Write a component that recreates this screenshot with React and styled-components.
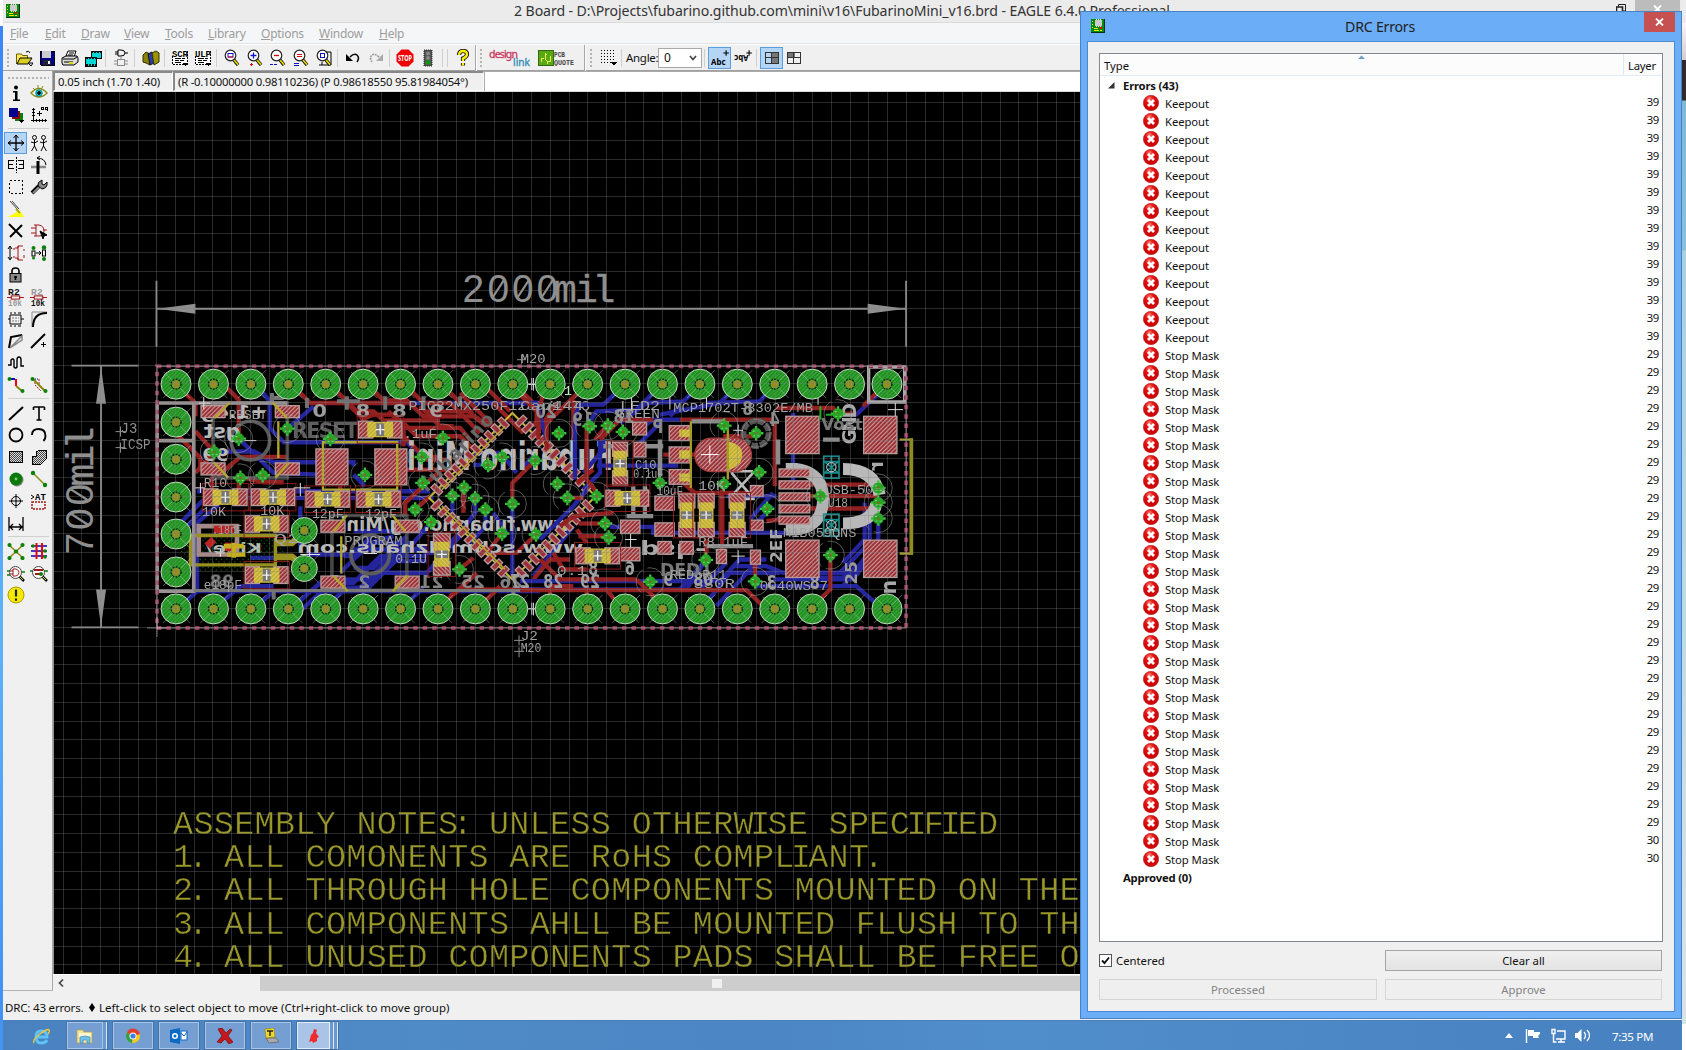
import React from "react";
import styled, { createGlobalStyle } from "styled-components";

const ui = `"Noto Sans", "Open Sans", sans-serif`;
const mono = `"Liberation Mono", monospace`;

const Global = createGlobalStyle`
  * { box-sizing: border-box; }
  html, body { margin: 0; padding: 0; overflow: hidden; }
  body { font-family: ${ui}; font-size: 11.3px; color: #111; background: #fff; }
  svg { display: block; }
`;

/* ---------- shell ---------- */
const Desktop = styled.div`
  position: relative; width: 1686px; height: 1050px; overflow: hidden;
  display: grid; grid-template-columns: 3px 1679px 4px; background: #fff;
`;
const LeftEdge = styled.div`
  background: linear-gradient(#fff 0 26px, #3a86f8 26px, #4d9cf8 450px, #5db4fa 620px, #4294f4 990px);
`;
const RightEdge = styled.div`
  background: linear-gradient(#ececec 0 23px, #f6f6f6 23px, #cfcfcf 60px, #2c2c30 60px 100px, #7fb9d6 101px, #8cc0da 250px, #a9cfe2 251px, #cfe0ea 860px, #d5e4ec 1024px, #fff 1024px);
`;
const Main = styled.div`display: flex; flex-direction: column; height: 1050px; min-width: 0;`;
const TitleBar = styled.div`
  height: 23px; background: #ebebeb; border-bottom: 1px solid #dadcde; display: flex; align-items: center;
  padding-left: 3px; font-size: 14.1px; color: #333; flex: none; letter-spacing: -0.08px;
`;
const TitleText = styled.div`flex: 1; padding: 0 0 1px 494px; white-space: pre;`;
const WinButtons = styled.div`display: flex; align-self: flex-start; padding-right: 2px; align-items: flex-start;`;
const GreyClose = styled.div`
  width: 45px; height: 20px; background: #bcbcbc; color: #fff; display: flex; justify-content: center; padding-top: 5px;
`;
const RestoreBox = styled.div`width: 19px; padding-top: 4px;`;
const MenuBar = styled.div`
  height: 21px; background: #f5f6f7; display: flex; padding-left: 7px; gap: 16px; align-items: center;
  color: #9d9d9d; flex: none; border-bottom: 1px solid #e3e3e3; font-size: 12px;
`;
const MenuItem = styled.span`
  width: ${(p) => p.$w}px; letter-spacing: -0.25px; white-space: nowrap; display: inline-block;
  &::first-letter { text-decoration: underline; }
`;
const ToolBar = styled.div`
  height: 27px; background: #f0f0f0; display: flex; align-items: center; flex: none;
  border-bottom: 1px solid #a0a0a0; border-top: 1px solid #fff; padding-left: 3px;
`;
const Grip = styled.div`
  flex: none; width: ${(p) => (p.$h ? "42px" : "4px")}; height: ${(p) => (p.$h ? "4px" : "20px")};
  margin: ${(p) => p.$m || "0"};
  background-image: radial-gradient(circle, #b4b4b4 1px, transparent 1.2px); background-size: 4px 4px;
`;
const Slot = styled.div`
  width: ${(p) => p.$w || 23}px; height: 22px; display: flex; align-items: center; justify-content: center; flex: none;
  background: ${(p) => (p.$on ? "#b5d5f5" : "none")};
  border: ${(p) => (p.$on ? "1px solid #5a9de0" : "0")};
`;
const Sep = styled.div`
  width: ${(p) => p.$w || 6}px; height: 18px; flex: none; display: flex; justify-content: space-evenly;
  &::before { content: ""; width: 1px; background: #cfcfcf; }
  &::after { content: ""; width: ${(p) => (p.$two ? 1 : 0)}px; background: #cfcfcf; }
`;
const BarEnd = styled.div`width: 2px; height: 26px; background: #a6a6a6; border-right: 1px solid #fff; margin: ${(p) => p.$m || 0}; flex: none;`;
const AngleLabel = styled.span`width: 33px; font-size: 11.5px; letter-spacing: -0.3px; padding-left: 1px; flex: none;`;
const Select = styled.div`
  width: 44px; height: 20px; border: 1px solid #a9a9a9; background: #fff; display: flex; align-items: center;
  justify-content: space-between; padding: 0 4px 0 5px; font-size: 12px; flex: none;
`;
const Work = styled.div`display: flex; height: 920px; flex: none;`;
const SideBar = styled.div`
  width: 50px; background: #f0f0f0; border-right: 1px solid #a8a8a8; border-bottom: 1px solid #b4b4b4; padding: 5px 2px 0 1px; flex: none;
`;
const Tools = styled.div`display: grid; grid-template-columns: 23px 23px; grid-auto-rows: 22px; padding-top: ${(p) => p.$t || 0}px;`;
const HSep = styled.div`height: 1px; background: #d0d0d0; margin: ${(p) => p.$m} 1px ${(p) => p.$b} 4px;`;
const Stage = styled.div`display: flex; flex-direction: column; flex: 1; min-width: 0;`;
const CoordRow = styled.div`height: 21px; display: flex; background: #f0f0f0; flex: none; border-bottom: 1px solid #dcdcdc;`;
const Coord = styled.div`
  width: ${(p) => p.$w}px; border: 1px solid #fff; border-top: 2px solid #888; border-left: 2px solid #888; padding-left: 3px;
  line-height: 17px; font-size: ${(p) => p.$f}px; letter-spacing: ${(p) => p.$ls}px; white-space: nowrap;
`;
const Command = styled.div`flex: 1; background: #fff; border-left: 1px solid #aaa; border-top: 1px solid #aaa;`;
const Scroll = styled.div`
  height: 16px; margin-top: 1px; display: flex; background: #f0f0f0; flex: none; align-items: center;
`;
const Thumb = styled.div`height: 15px; flex: 1; margin-left: 191px; background: #cdcdcd; padding: 3px 0 0 452px;`;
const Nub = styled.div`width: 10px; height: 9px; background: #f0f0f0;`;
const Status = styled.div`
  height: 29px; background: #f0f0f0; display: flex; align-items: center; padding: 3px 0 0 2px; flex: none; gap: 4px; white-space: pre;
`;
const StatusText = styled.span`font-size: 11.5px; letter-spacing: ${(p) => p.$ls}px; width: ${(p) => p.$w}px;`;

/* ---------- taskbar ---------- */
const TaskBar = styled.div`
  height: 30px; flex: none; display: flex; border-top: 1px solid #4a80bd;
  background: linear-gradient(90deg, #4a82c0, #4f8bc7 25%, #4c86c4 45%, #508ecb 60%, #4880c0);
`;
const TaskBtn = styled.div`
  width: ${(p) => p.$w || 42}px; height: 29px; margin-right: 4px; display: flex; flex: none;
  background: ${(p) => (p.$hot ? "#a9c4e6" : "#759fd2")}; border: 1px solid #b4cdea; outline: 1px solid #4673a8; outline-offset: -1px;
  border-color: ${(p) => (p.$hot ? "#e8f1fb" : "#a3c0e3")};
`;
const TaskFace = styled.div`
  flex: 1; display: flex; align-items: center; justify-content: center; border: 1px solid ${(p) => (p.$hot ? "#e4eefa" : "#a9c4e5")};
`;
const LaunchSlot = styled.div`width: 63px; display: flex; align-items: center; padding-left: 29px; flex: none;`;
const Stack = styled.div`width: 4px; border-right: 1px solid #dbe8f7; background: #6b98ce;`;
const Tray = styled.div`margin-left: auto; display: flex; align-items: center; color: #fff; padding: 1px 26px 0 0;`;
const Clock = styled.span`width: 44px; font-size: 11.6px; letter-spacing: -0.35px; margin-left: 22px; white-space: nowrap;`;

/* ---------- DRC dialog ---------- */
const Dialog = styled.div`
  position: absolute; left: 1080px; top: 11px; width: 602px; height: 1008px; background: #6badf6; border: 1px solid #4883c0;
  display: flex; flex-direction: column; padding: 0 6px 7px 6px;
`;
const DlgTitle = styled.div`height: 29px; display: flex; align-items: flex-start; flex: none; font-size: 14.2px; color: #222;`;
const DlgName = styled.div`flex: 1; text-align: center; padding: 5px 0 0 11px; letter-spacing: -0.25px;`;
const DlgClose = styled.div`width: 31px; height: 20px; background: #c75050; display: flex; align-items: center; justify-content: center;`;
const DlgIcon = styled.div`padding: 7px 0 0 4px;`;
const DlgBody = styled.div`
  flex: 1; background: #f0f0f0; border: 1px solid #4b8ad0; padding: 11px 11px 11px 11px; display: flex; flex-direction: column;
`;
const List = styled.div`height: 889px; border: 1px solid #828790; background: #fff; flex: none;`;
const Head = styled.div`height: 22px; display: flex; border-bottom: 1px solid #e3ecf5; background: #fcfcfc; line-height: 23px;`;
const HeadType = styled.div`flex: 1; padding-left: 4px; display: flex;`;
const SortMark = styled.div`margin-left: 229px; padding-top: 1px;`;
const HeadLayer = styled.div`width: 39px; border-left: 1px solid #dfe9f5; padding-left: 4px; letter-spacing: -0.25px;`;
const Group = styled.div`
  height: ${(p) => p.$h || 18}px; display: flex; align-items: center; padding-left: ${(p) => p.$l || 8}px; gap: 8px; font-weight: 700;
  letter-spacing: -0.2px; white-space: nowrap;
`;
const Row = styled.div`height: 18px; display: flex; align-items: center; padding: 0 3px 0 43px;`;
const RowText = styled.span`margin-left: 6px; flex: 1; letter-spacing: -0.1px; padding-top: 1px;`;
const RowLayer = styled.span`letter-spacing: -0.3px; padding-bottom: 3px;`;
const Buttons = styled.div`display: grid; grid-template-columns: 278px 277px; column-gap: 8px; row-gap: 8px; padding-top: 8px;`;
const Check = styled.div`display: flex; align-items: center; gap: 4px; letter-spacing: 0;`;
const Box = styled.div`width: 13px; height: 13px; border: 1px solid #555; background: #fff; display: flex; align-items: center; justify-content: center;`;
const Button = styled.div`
  height: 21px; display: flex; align-items: center; justify-content: center;
  border: 1px solid ${(p) => (p.$off ? "#d5d5d5" : "#a5a5a5")}; color: ${(p) => (p.$off ? "#838383" : "#111")};
  background: ${(p) => (p.$off ? "#efefef" : "linear-gradient(#f0f0f0, #e3e3e3)")};
`;

/* ---------- icons ---------- */
const Ico = ({ s = 18, children, crisp }) => (
  <svg width={s} height={s} viewBox="0 0 18 18" fill="none" stroke="#000" strokeWidth="1" shapeRendering={crisp ? "crispEdges" : "auto"}>{children}</svg>
);
const Chip = () => (
  <svg width="14" height="14" viewBox="0 0 14 14" shapeRendering="crispEdges">
    <rect width="14" height="14" fill="#00331a" /><rect width="13" height="13" fill="#0a8a0a" />
    <rect x="4" y="1" width="7" height="6" fill="#ccc" /><path d="M5 1V0M7 1V0M9 1V0M5 8V7M7 8V7M9 8V7" stroke="#eee" />
    <path d="M1 2h1M1 5h1M1 8h1M3 9h4M3 11h5M9 11h2" stroke="#ee0" /><rect x="9" y="8" width="2" height="2" fill="#e00" />
  </svg>
);
const Lens = ({ children, page }) => (
  <Ico>
    {page && <path d="M11 3h5v13H4M7 16v-3" />}
    <path d="M11 11l4 5" stroke="#000" strokeWidth="3.4" /><path d="M11 11l4 4.6" stroke="#e8d800" strokeWidth="1.8" />
    <circle cx="7.5" cy="6.5" r="5.3" fill="#fff" stroke="#222" strokeWidth="1.2" />{children}
  </Ico>
);
const Script = ({ t }) => (
  <Ico crisp>
    <rect x="1.5" y="1.5" width="15" height="14" fill="#fff" strokeDasharray="2 1" />
    <rect x="1" y="1" width="15" height="6" fill="#fff" stroke="none" />
    <text x="1" y="7.5" fontFamily={mono} fontWeight="700" fontSize="9" fill="#000" stroke="none" textLength="16">{t}</text>
    <path d="M4 9.5h6M11 9.5h3M4 11.5h4M9 11.5h4M4 13.5h6" /><path d="M12 14h5l-2.5 3z" fill="#000" stroke="none" />
  </Ico>
);
const Red = "#a01818", Gr = "#0a820a", Ol = "#8a8a10";
const topA = [
  <Ico><path d="M1.500 15V5h5l1 1.500h5V9" fill="#ffe95a" stroke="#6b5f00" /><path d="M2 15l3-6h12l-4 6z" fill="#d8cf20" stroke="#000" /><path d="M11 3q3-2 4 1M13 14h5l-2 3z" /></Ico>,
  <Ico crisp><path d="M2 2h14v14H3l-1-1z" fill="#00008c" stroke="#000" /><rect x="4" y="2" width="9" height="7" fill="#ccc" stroke="none" /><rect x="5" y="11" width="8" height="5" fill="#223" stroke="none" /><rect x="10" y="12" width="2" height="3" fill="#eee" stroke="none" /></Ico>,
  <Ico><path d="M5 7l2-5h8l-2 6zM8 4h5M7 6h5" fill="#fff" /><path d="M1 9l4-2h11l1 2v4l-4 3H2l-1-2z" fill="#ddd" /><path d="M2 10h11l3-2M3 13h9" /><path d="M8 14h4" stroke="#dd0" strokeWidth="2" /></Ico>,
  <Ico crisp><rect x="7" y="2" width="10" height="7" fill="#00d5d5" /><rect x="1" y="8" width="11" height="9" fill="#00d5d5" /><path d="M7 3h10M2 9h10M2 16h10" stroke="#111" strokeWidth="2" strokeDasharray="2 1" /></Ico>,
];
const Gates = () => <Ico><path d="M6 1h3q4 0 4 3t-4 3H6zM3 3h3M3 5h3M13 4h3" /><g stroke="#8a8a8a"><rect x="5.500" y="10.500" width="7" height="6" /><path d="M2 12h3M2 15h3M13 12h3M13 15h3M9 7v3" /></g></Ico>;
const Books = () => <Ico><path d="M1 6l3-3 4 2v11l-4-2-3-1z" fill="#8a8200" stroke="#333000" /><path d="M6 5l4-2 2 2v9l-4 2z" fill="#2b3bb0" stroke="#111" /><path d="M10 4l4-2 3 2v9l-5 3z" fill="#9a9200" stroke="#333000" /></Ico>;
const Undo = ({ flip }) => (
  <Ico><g transform={flip ? "translate(18) scale(-1 1)" : undefined}>
    <path d="M6 8q4-4 7-2 3 3 0 7" stroke={flip ? "#999" : "#000"} strokeWidth="1.500" strokeDasharray={flip ? "2 .8" : undefined} /><path d="M2 5v7h7z" fill={flip ? "#aaa" : "#000"} stroke="none" />
  </g></Ico>
);
const Stop = () => <Ico><path d="M5.500 0.500h7l5 5v7l-5 5h-7l-5-5v-7z" fill="#f00000" stroke="none" /><text x="2" y="12" fontSize="8" fontWeight="700" fill="#fff" stroke="none" fontFamily={ui} textLength="14" lengthAdjust="spacingAndGlyphs">STOP</text></Ico>;
const Light = () => <Ico><rect x="5" y="1" width="8" height="16" fill="#555" stroke="#222" strokeDasharray="1 1" /><circle cx="9" cy="4.500" r="2" fill="#888" stroke="none" /><circle cx="9" cy="9" r="2" fill="#888" stroke="none" /><circle cx="9" cy="13.500" r="2.300" fill="#0a9a0a" stroke="none" /></Ico>;
const Help = () => <Ico><path d="M5 6q0-4 4-4t4 3.500q0 2-4 4V12M9 14v2.500" stroke="#111" strokeWidth="4.200" /><path d="M5 6q0-4 4-4t4 3.500q0 2-4 4V12M9 14v2.500" stroke="#fff000" strokeWidth="2.400" /></Ico>;
const GridIco = () => <Ico crisp>{[1, 4, 7, 10, 13].map((y) => <path key={y} d={`M1 ${y + 0.5}h15`} strokeDasharray="1 2" />)}<path d="M11 13h6l-3 4z" fill="#000" stroke="none" /></Ico>;
const Abc = ({ flip }) => (
  <Ico s={20}>
    <text x="1" y="15.500" fontFamily={ui} fontSize="8.500" fontWeight="700" fill="#000" stroke="none" textLength="13" lengthAdjust="spacingAndGlyphs" transform={flip ? "rotate(180 7.500 11)" : undefined}>Abc</text>
    <path d="M14.500 2v5M12 4.500h5" />
  </Ico>
);
const Panels = ({ r }) => <Ico crisp><rect x={r ? 8 : 2} y="3" width="8" height={r ? 12 : 6} fill="#777" stroke="none" /><path d="M2.500 3.500h13v11h-13zM8.500 3v12M2 8.500h13" stroke="#333" /></Ico>;

const R2 = ({ a, b }) => (
  <Ico s={19}>
    <text x="2" y="6.500" fontSize="8" fontFamily={mono} fontWeight="700" fill={a} stroke="none" textLength="11" lengthAdjust="spacingAndGlyphs">R2</text>
    <path d="M1 9h4M13 9h4" stroke={Red} /><rect x="5" y="7.500" width="8" height="3" stroke={Red} />
    <text x="2" y="17" fontSize="8" fontFamily={mono} fontWeight="700" fill={b} stroke="none" textLength="13" lengthAdjust="spacingAndGlyphs">10k</text>
  </Ico>
);
const side1 = [
  <Ico><circle cx="9" cy="3.500" r="2" fill="#000" stroke="none" /><path d="M6 7h4.500v8.500H13v1.500H6v-1.500h2V8.500H6z" fill="#000" stroke="none" /></Ico>,
  <Ico><path d="M1 9q8-9 16 0-8 8-16 0z" fill="#fff" stroke={Ol} strokeWidth="1.400" /><circle cx="9" cy="9" r="3.300" fill="#00cfe0" stroke="#088" /><circle cx="9" cy="9" r="1.400" fill="#000" /><path d="M3 4l2 2M8 1v3M13 2l-1 2" stroke={Ol} /></Ico>,
  <Ico crisp><rect x="8" y="7" width="8" height="8" fill={Gr} stroke="none" /><rect x="5" y="5" width="8" height="8" fill="#8a0a0a" stroke="none" /><rect x="2" y="2" width="9" height="9" fill="#00008a" stroke="none" /><path d="M12 14h5l-2.500 3z" fill="#000" stroke="none" /></Ico>,
  <Ico crisp><path d="M3.500 2v14M1 14.500h16M2 3.500h3M2 6.500h3M2 9.500h3M6.500 13v3M9.500 13v3M12.500 13v3M15.500 13v3M9.500 5v5M7 7.500h5" /><path d="M11 1h2v2h-2zM15 1h2v2h-2zM17 3v2" /></Ico>,
];
const side2 = [
  <Ico><path d="M9 1v16M1 9h16" strokeWidth="1.300" /><path d="M6.500 4L9 1l2.500 3M6.500 14L9 17l2.500-3M4 6.500L1 9l3 2.500M14 6.500L17 9l-3 2.500" /></Ico>,
  <Ico><circle cx="4.500" cy="3.500" r="2" /><circle cx="13.500" cy="3.500" r="2" /><path d="M4.500 6v6M1 8l3.500 1L8 7M4.500 12l-3 5M4.500 12l2.500 5M13.500 6v6M10 8l3.500 1L17 7M13.500 12l-2.500 5M13.500 12l3 5" /></Ico>,
  <Ico crisp><path d="M7 4.500H1.500v8H7M2 8.500h4M11 4.500h5.500v8H11M16 8.500h-4" strokeWidth="1.200" /><path d="M9 1v16" strokeDasharray="2 1" /></Ico>,
  <Ico><path d="M1 11h15" stroke="#888" strokeWidth="2.500" /><path d="M8 5v13" strokeWidth="3" /><path d="M7 2q8 0 9 7M7 2l3-2M7 2l3 2" /></Ico>,
  <Ico crisp><rect x="2.500" y="2.500" width="13" height="13" strokeDasharray="2 2" /></Ico>,
  <Ico><path d="M2 15l7-7" stroke="#000" strokeWidth="4" /><path d="M3 15l6-6" stroke="#888" strokeWidth="2" /><path d="M8 8q-1-4 4-6v4l2 1 3-3q1 6-5 7z" fill="#888" /></Ico>,
  <Ico><path d="M3 1l8 9M5 1l7 8" stroke="#444" /><path d="M10 12h4l3 5H1z" fill="#ff0" stroke="none" /><path d="M9 9l4 4" stroke="#aa0" strokeWidth="2" /></Ico>, null,
  <Ico><path d="M2 2l13 13M15 3L3 15" strokeWidth="2" /></Ico>,
  <Ico><path d="M4 3h5q5 1 5 6t-5 5H4M1 6h5M1 11h5M6 3v11M13 8h4" stroke={Red} /><path d="M10 9l7 4-3 1-1 3z" fill="#000" /></Ico>,
  <Ico><path d="M3 3v12M1 5l2-3 2 3M1 13l2 3 2-3" /><path d="M8 4h3V2h5M8 14h3v2h5M11 2v14M6 5h2M6 13h2M17 5v2M17 11v3" stroke={Red} /></Ico>,
  <Ico><rect x="2" y="7" width="3" height="5" /><rect x="12.500" y="6" width="3" height="6" /><path d="M6 9h5M9 7l2 2-2 2" /><circle cx="3.500" cy="4" r="2" fill={Gr} stroke="none" /><circle cx="3.500" cy="14" r="1.500" fill={Gr} stroke="none" /><circle cx="14" cy="3.500" r="2.200" fill={Gr} stroke="none" /><circle cx="14" cy="15" r="2" fill={Gr} stroke="none" /></Ico>,
  <Ico><path d="M5 8V5q0-3 3.500-3T12 5v3" strokeWidth="1.600" /><rect x="3" y="7.500" width="11" height="8.500" fill="#888" /><path d="M8.500 10v4M7 11h3" strokeWidth="1.500" /></Ico>, null,
  <R2 a="#111" b="#999" />, <R2 a="#999" b="#111" />,
  <Ico><path d="M3 5h11v9H3zM3 3h2M7 3h2M11 3h3M3 16h2M7 16h2M11 16h3" /><path d="M5 8h7M5 11h7" stroke="#777" strokeDasharray="2 1" /><path d="M1 9h2M14 9h3" /></Ico>,
  <Ico><path d="M2 2h15M2 2v15" stroke="#aaa" strokeWidth="1.500" /><path d="M3 17Q3 3 17 3" strokeWidth="2" /></Ico>,
  <Ico><path d="M2 16L4 5 15 3" strokeWidth="2" /><path d="M3 16L15 4v4z" stroke="#888" strokeWidth="1.500" /></Ico>,
  <Ico><path d="M1 16L15 2" strokeWidth="2" /><path d="M13.500 10v5M11 12.500h5" /></Ico>,
  <Ico><path d="M1 11h3V6q2-2 3 0v7q1.500 2 3 0V6q0-3 2-3t2 3v6h3" strokeWidth="1.400" /></Ico>, null,
  <Ico><path d="M3 3h5" stroke="#00c" strokeWidth="2" /><path d="M9 3v7" stroke="#e00" strokeWidth="2" /><path d="M9 10l6 5" stroke={Ol} strokeWidth="2" /><circle cx="2.500" cy="3" r="2" fill={Gr} stroke="none" /><circle cx="15.500" cy="15" r="2" fill={Gr} stroke="none" /></Ico>,
  <Ico><path d="M3 3h6" stroke="#00c" strokeDasharray="1 1" /><path d="M9 3v7l6 5M5 3v6l6 6" stroke={Red} strokeDasharray="2 1" /><path d="M3 3l12 12" stroke={Ol} strokeWidth="2" /><circle cx="2.500" cy="3" r="2" fill={Gr} stroke="none" /><circle cx="15.500" cy="15" r="2" fill={Gr} stroke="none" /></Ico>,
];
const side3 = [
  <Ico><path d="M2 16L16 3" strokeWidth="2" /></Ico>,
  <Ico><path d="M3.500 3h11M9 3v13M6.500 16h5M3.500 3v3M14.500 3v3" strokeWidth="1.600" /></Ico>,
  <Ico><circle cx="9" cy="9" r="6.500" strokeWidth="1.800" /></Ico>,
  <Ico><path d="M2 9q0-6 6.500-6 7 0 7 7 0 3-2 5" strokeWidth="1.900" /></Ico>,
  <Ico crisp><rect x="2.500" y="3.500" width="13" height="11" fill="url(#dot)" /></Ico>,
  <Ico crisp><path d="M2 16V8h4V4l4-2h6v9l-5 5z" fill="url(#dot)" /></Ico>,
  <Ico><circle cx="10" cy="10" r="6.500" fill="#888" stroke="none" /><circle cx="9" cy="9" r="6.500" fill="#0a7a0a" stroke="none" /><circle cx="9" cy="9" r="1.400" fill="#7c7" stroke="none" /></Ico>,
  <Ico><path d="M3 3l12 12" stroke={Ol} strokeWidth="1.400" /><circle cx="3" cy="3" r="2.200" fill={Gr} stroke="none" /><circle cx="15" cy="15" r="2.200" fill={Gr} stroke="none" /></Ico>,
  <Ico><circle cx="9" cy="9" r="4.500" /><path d="M9 2v14M2 9h14" /></Ico>,
  <Ico><path d="M1 3l3 2-3 2" /><text x="5" y="8" fontSize="9" fontFamily={mono} fontWeight="700" fill="#000" stroke="none">AT</text><rect x="2" y="10" width="13" height="7" stroke={Red} strokeWidth="1.500" strokeDasharray="2 1" /></Ico>,
  <Ico><path d="M2 3v14M16 3v14M3 13h12M6 10l-3 3 3 3M12 10l3 3-3 3" strokeWidth="1.300" /></Ico>, null,
];
const side4 = [
  <Ico><path d="M2 3l14 13M16 3L2 16" stroke={Ol} strokeWidth="1.500" />{[[2.5, 3], [15.500, 3], [9, 9.500], [2.5, 16], [15.500, 16]].map(([x, y]) => <circle key={x + "," + y} cx={x} cy={y} r="2.100" fill={Gr} stroke="none" />)}</Ico>,
  <Ico><path d="M1 4h16M1 9h16M1 14h16" stroke="#00b" strokeWidth="1.500" /><path d="M6.500 1v16M12 1v16" stroke="#e00" strokeWidth="2" /><circle cx="3" cy="4" r="1.800" fill={Gr} stroke="none" /><circle cx="15" cy="9" r="1.800" fill={Gr} stroke="none" /><circle cx="15" cy="15" r="1.800" fill={Gr} stroke="none" /></Ico>,
  <Ico><path d="M12 12l5 5" strokeWidth="2.500" /><path d="M13 13l3 3" stroke="#dd0" /><path d="M0 7h4M0 11h4M14 8h4" stroke={Gr} strokeWidth="1.500" /><circle cx="8.500" cy="8.500" r="6" fill="#fff" stroke="#444" /><path d="M6 5h3q3 1 3 3.500T9 12H6zM3 7h3M3 10h3" stroke={Red} /></Ico>,
  <Ico><path d="M12 12l5 5" strokeWidth="2.500" /><path d="M13 13l3 3" stroke="#dd0" /><path d="M0 7h18" stroke={Gr} strokeWidth="1.500" /><circle cx="8.500" cy="8.500" r="6" fill="#fff" stroke="#444" /><path d="M4 6h9M5 10h5" stroke={Red} strokeWidth="2" /><circle cx="11" cy="10" r="2" fill={Gr} stroke="none" /></Ico>,
  <Ico><circle cx="9" cy="9" r="8" fill="#f5ea00" stroke="#a89c00" /><path d="M9 3.500v7M9 12.500v2.300" stroke="#222" strokeWidth="2.200" /></Ico>, null,
];

/* ---------- board drawing ---------- */
const narrow = { ".": [10.3, -5.5], ":": [10.3, -5.5], I: [13.6, -3.6] };
const advances = (s, x0) => {
  let x = x0;
  return [...s].map((c) => { const [a, dx] = narrow[c] || [20.4, 0]; const v = x + dx; x += a; return v.toFixed(1); }).join(" ");
};
const notes = [
  "ASSEMBLY NOTES: UNLESS OTHERWISE SPECIFIED",
  "1. ALL COMONENTS ARE RoHS COMPLIANT.",
  "2. ALL THROUGH HOLE COMPONENTS MOUNTED ON THE",
  "3. ALL COMPONENTS AHLL BE MOUNTED FLUSH TO TH",
  "4. ALL UNUSED COMPONENTS PADS SHALL BE FREE O",
];
const padXs = Array.from({ length: 20 }, (_, i) => 175.6 + i * 37.46);
const headPads = [...padXs.map((x) => [x, 384.5]), ...padXs.map((x) => [x, 609.5]), ...[422.5, 459.7, 497.5, 534.5, 572.5].map((y) => [175.6, y])];

const Pad = ({ x, y, r = 15 }) => (
  <g>
    <circle cx={x} cy={y} r={r} fill="url(#green)" stroke="#c4dcc4" strokeWidth="1" />
    <path d={`M${x - 13} ${y + 14}L${x + 15} ${y - 14}M${x - 12} ${y - 12}L${x + 14} ${y + 14}`} stroke="#bfe0bf" strokeWidth=".6" opacity=".7" />
    <circle cx={x} cy={y} r="5" fill="none" stroke="#061806" strokeWidth="1.200" strokeDasharray="2 1.200" />
    <circle cx={x} cy={y} r="3.900" fill="#929022" />
  </g>
);
const Via = ({ x, y }) => (
  <g>
    <circle cx={x} cy={y} r="42" fill="none" stroke="#aaa" strokeWidth="2.500" strokeDasharray="80 14" opacity=".6" />
    <path d={`M${x - 22} ${y}h44M${x} ${y - 22}v44`} stroke="#3cc03c" strokeWidth="7" />
    <path d={`M${x - 15} ${y - 8}l7-7h16l7 7v16l-7 7h-16l-7-7z`} fill="#27a527" />
    <path d={`M${x - 10} ${y - 6}h6M${x + 4} ${y + 8}h6M${x - 8} ${y + 8}h5`} stroke="#7fe07f" strokeWidth="3" />
    <circle cx={x} cy={y} r="4" fill="#7a6a20" />
  </g>
);
const Smd = ({ d: [x, y, w, h] }) => <rect x={x} y={y} width={w} height={h} fill="url(#red)" stroke="#b79a9a" strokeWidth="4" />;
const Chip2 = ({ d: [x, y, w, h] }) => {
  const v = h > w, L = v ? h : w, T = v ? w : h;
  return (
    <g transform={v ? `translate(${x + w} ${y}) rotate(90)` : `translate(${x} ${y})`}>
      <rect x="-4" y={-16} width={L + 8} height={T + 32} fill="none" stroke="#8a1818" strokeWidth="3" />
      <Smd d={[0, 0, L * 0.33, T]} /><Smd d={[L * 0.67, 0, L * 0.33, T]} />
      <rect x={L * 0.2} y="2" width={L * 0.6} height={T - 4} fill="url(#yel)" />
      <rect x={L * 0.41} y={T * 0.12} width={L * 0.18} height={T * 0.76} fill="#777" />
      <path d={`M${L * 0.4} ${T / 2}h${L * 0.2}M${L / 2} ${T * 0.2}v${T * 0.6}`} stroke="#f4f4f4" strokeWidth="4" />
    </g>
  );
};
const red1 = [
  "117 385 165 430 165 470", "260 385 295 420 295 537", "165 515 222 577 165 640", "110 525 180 595 180 635", "230 650 300 592 441 592", "310 655 370 668 430 668",
  "470 390 510 430 600 430", "585 390 650 455 700 455 730 482 900 482", "697 390 730 422 800 422 850 470 1000 470 1040 500", "810 390 850 430 930 430 1020 520",
  "920 390 1000 468 1050 500", "1040 385 1110 455", "1150 400 1190 440 1190 500", "790 490 830 530 960 530 1000 570", "660 480 700 465 760 465 800 505 960 505 990 540",
  "600 430 800 430", "840 440 900 500 940 500", "860 455 1000 455", "845 592 905 592", "800 630 930 630 960 600", "795 770 795 730 860 670 905 630", "825 750 870 710",
  "1117 733 1117 670 1185 603", "1188 825 1130 880 1030 880", "1086 822 1040 880", "958 930 1000 895", "930 1010 960 990 1200 990", "890 1050 1010 940", "1010 1050 1080 980",
  "295 640 295 700", "215 650 215 700", "600 680 600 700", "1200 470 1180 500", "970 690 970 760",
  "780 520 860 600 930 600", "745 455 790 500 790 560", "630 440 690 500", "1060 430 1150 520", "960 400 1060 500", "1250 430 1190 520", "1300 420 1300 560", "1180 960 1230 900 1290 900",
];
const blue1 = [
  "360 390 388 425 388 505 430 548 800 548 850 590", "520 440 441 507", "222 577 340 575 400 608 640 608 640 620", "295 537 400 640 540 645", "170 695 870 695",
  "210 715 880 715", "170 995 170 790 250 720", "110 800 190 720", "110 830 190 750", "640 645 674 680", "700 430 1200 430", "1000 580 1080 580", "1000 616 1040 616", "1036 750 1036 800 990 850",
  "937 709 937 780", "1117 733 1117 960", "873 788 820 850 700 850 650 890 610 890", "1005 716 1005 760 960 820 900 880 850 880", "110 1050 170 995 1200 995", "230 1040 300 980 400 980",
  "350 1040 400 995", "450 1050 540 970 640 970 720 890 860 890", "485 1050 545 995 650 995 740 905 860 905", "560 1040 620 985 680 985 770 860", "670 1040 670 1000 800 870", "790 1040 850 985",
  "640 815 860 815", "1090 590 1130 640", "500 885 640 885 720 800", "330 895 430 895", "700 960 780 880 860 860", "560 960 700 960", "1150 620 1190 580",
  "600 940 690 850 760 830", "640 870 860 870", "720 940 860 940 960 830", "640 925 700 925 800 830", "480 740 480 860", "1300 800 1180 950", "1340 560 1340 620", "1060 760 1100 820",
];
const red2 = [
  "0 165 55 220 55 300", "75 140 60 200", "190 145 80 250 80 330", "200 260 200 400", "240 300 300 240 400 240", "170 430 220 390", "142 475 190 475", "175 552 255 552", "175 590 260 590",
  "0 752 680 752 735 805", "255 745 300 800", "350 720 420 790", "90 800 90 740 160 740", "200 800 200 740", "770 205 940 205 955 222 1010 222", "870 435 1070 435", "870 470 1076 470", "870 507 1070 507",
  "932 640 932 750 880 800", "706 726 706 640", "607 450 607 670", "558 661 558 600", "430 345 530 345", "525 460 690 460", "490 430 525 460", "765 250 765 440", "740 545 780 540", "1030 200 1100 130",
  "60 660 120 720 350 720", "100 640 130 690 200 690", "200 610 170 570", "610 290 700 290", "480 240 760 240", "200 330 200 420 240 470", "225 300 260 260", "280 520 160 530 120 560", "560 600 560 640",
];
const blue2 = [
  "0 190 50 190 80 300", "310 140 250 195 180 195 165 230 165 420", "420 140 350 210 230 215 200 260", "540 140 490 185 380 190 300 250", "650 140 600 190 420 225", "760 140 720 185 560 190", "400 240 340 280",
  "1100 140 1010 225 955 222", "820 220 820 440", "230 378 475 378", "240 300 240 400 190 450", "0 725 600 725 660 660 740 660", "0 750 500 750 558 661", "640 680 740 680 790 700 1020 700", "480 750 560 661",
  "270 562 400 562 400 580 840 580 900 520 900 470", "610 580 750 580", "700 560 760 500", "1076 537 1076 660", "1035 490 1035 600 970 670", "1050 520 1050 610 960 700", "710 740 1010 740 1090 810", "560 790 630 700 780 700",
  "620 470 770 470", "450 230 480 200", "60 600 160 500 200 450", "970 740 1040 650", "540 750 620 670", "760 460 690 540", "360 310 420 250", "850 715 970 715 1010 680",
  "190 400 250 330 250 300", "320 240 480 240", "760 720 1000 720 1060 640", "590 800 700 680",
];
const smd1 = [[182, 438, 72, 36], [405, 438, 72, 36], [182, 610, 72, 36], [405, 610, 72, 36], [542, 782, 72, 36], [765, 782, 72, 36], [542, 950, 72, 36], [765, 950, 72, 36], [527, 568, 96, 108], [704, 568, 96, 108]];
const smd2 = [[798, 230, 100, 112], [1032, 230, 100, 112], [798, 602, 100, 112], [1032, 602, 100, 112], [338, 248, 42, 38], [342, 308, 36, 44], [448, 258, 60, 45], [448, 322, 62, 48], [448, 390, 62, 44], [405, 470, 58, 42], [405, 550, 58, 40], [302, 542, 58, 40], [302, 624, 58, 40], [414, 606, 40, 38], [480, 606, 40, 38], [590, 630, 30, 42], [692, 632, 30, 42], [692, 438, 38, 32], [692, 542, 38, 30], [778, 388, 92, 24], [778, 424, 92, 24], [778, 460, 92, 24], [778, 496, 92, 24], [778, 530, 92, 24]];
const chip1 = [[655, 485, 130, 50], [190, 688, 130, 50], [333, 688, 130, 50], [497, 695, 130, 48], [650, 695, 130, 48], [315, 768, 128, 50], [315, 922, 128, 50], [880, 822, 50, 125]];
const chip2 = [[278, 308, 45, 128], [477, 463, 48, 128], [535, 463, 48, 128], [628, 463, 48, 128], [258, 452, 128, 48], [168, 625, 130, 48]];
const via1 = [[295, 537], [441, 507], [222, 577], [300, 655], [367, 647], [570, 538], [674, 646], [845, 592], [908, 535], [847, 670], [825, 750], [873, 788], [937, 709], [972, 684], [1005, 716], [1036, 750], [1117, 733], [1044, 616], [1086, 592], [1185, 603], [1086, 822], [958, 930], [1188, 825]];
const via2 = [[117, 281], [209, 260], [264, 258], [309, 277], [112, 433], [142, 475], [230, 470], [255, 552], [266, 594], [420, 430], [613, 258], [612, 433], [718, 398], [742, 508], [709, 281], [955, 222], [902, 470], [1076, 445], [1076, 489], [1076, 537], [558, 661], [391, 727], [706, 726], [932, 647]];
const pins = [];
for (let i = 0; i < 11; i++) {
  const t = i * 20;
  pins.push([890 + t, 690 - t, -45], [1143 + t, 484 + t, 45], [890 + t, 736 + t, 45], [1143 + t, 938 - t, -45]);
}
const bold = `"DejaVu Sans", sans-serif`;
const Mirror = ({ x, y, s, w, children, f = "#b9b9b9" }) => (
  <text transform={`translate(${x} ${y}) scale(-1 1)`} fontSize={s} fontWeight="700" fontFamily={bold} fill={f} textLength={w} lengthAdjust="spacingAndGlyphs">{children}</text>
);
const Lbl = ({ x, y, s = 38, w, children }) => <text x={x} y={y} fontSize={s} fontFamily={mono} fill="#a2a2a2" textLength={w} lengthAdjust="spacingAndGlyphs">{children}</text>;
const lines = (a, c, w) => <g fill="none" stroke={c} strokeWidth={w}>{a.map((p, i) => <polyline key={i} points={p} />)}</g>;
const vGrid = Array.from({ length: 55 }, (_, i) => 62.5 + i * 18.76);
const hGrid = Array.from({ length: 47 }, (_, i) => 102.8 + i * 18.76);

const Board = () => (
  <svg width="1029" height="883" viewBox="53 92 1029 883">
    <defs>
      <pattern id="dot" width="2" height="2" patternUnits="userSpaceOnUse"><rect width="2" height="2" fill="#ddd" /><path d="M0 0h1v1H0zM1 1h1v1H1z" fill="#444" stroke="none" /></pattern>
      <pattern id="green" width="4" height="4" patternUnits="userSpaceOnUse"><rect width="4" height="4" fill="#1f8c1f" /><path d="M0 0h1v1H0zM2 2h1v1H2zM1 3h1v1H1zM3 1h1v1H3z" fill="#49b749" /></pattern>
      <pattern id="red" width="9" height="9" patternUnits="userSpaceOnUse" patternTransform="rotate(45)"><rect width="9" height="9" fill="#962a30" /><rect width="3.500" height="9" fill="#cf9a9a" /></pattern>
      <pattern id="yel" width="9" height="9" patternUnits="userSpaceOnUse" patternTransform="rotate(45)"><rect width="9" height="9" fill="#c4ae38" /><rect width="3" height="9" fill="#d9cf50" /></pattern>
      <pattern id="gdots" width="16" height="16" patternUnits="userSpaceOnUse"><rect x="2" y="2" width="3" height="3" fill="#1a8a1a" /><rect x="10" y="10" width="3" height="3" fill="#1a8a1a" /></pattern>
    </defs>
    <rect x="53" y="92" width="1029" height="883" fill="#000" />

    <g stroke="#8f8f8f" strokeWidth="1.800" fill="#8f8f8f">
      <path d="M156 281v66M906.500 281v66M156 309H906M71 366h67M71 628h67M100.500 366V628" fill="none" />
      <path d="M157 309l38-5v10zM906 309l-38-5v10zM100.500 367l-5 37h10zM100.500 627l-5-37h10z" stroke="none" />
    </g>
    <g fill="#8f8f8f" fontFamily={`"Liberation Sans", sans-serif`} fontSize="39">
      <text y="302" x="462.500 487.500 512 536.500">2000</text>
      <text y="302" x="554 575 592.500" fontFamily={mono} fontSize="38" stroke="#8f8f8f" strokeWidth=".4">mil</text>
      <path d="M493 297l11-17M518 297l11-17M542 297l11-17" stroke="#8f8f8f" strokeWidth="2.200" />
      <g transform="translate(92 555) rotate(-90)">
        <text y="0" x="0 24.500 49">700</text>
        <text y="0" x="68 87 105" fontFamily={mono} fontSize="38" stroke="#8f8f8f" strokeWidth=".4">mil</text>
        <path d="M30 -5l11-17M54.500 -5l11-17" stroke="#8f8f8f" strokeWidth="2.200" />
      </g>
    </g>

    <g transform="translate(140 260) scale(.33333)">
      {lines(blue1, "#24249c", 13)}
      {lines(red1, "#922020", 13)}
      <g fill="none" stroke="#5c5c5c" strokeWidth="11">
        <path d="M218 430H441V655H218zM575 768H800V993H575z" opacity=".75" /><circle cx="330" cy="543" r="58" /><circle cx="690" cy="885" r="58" />
      </g>
      <path d="M395 400v30M400 415h30M500 415v30M590 425h70M620 410v40M735 410v40M850 410v40M960 410v30M400 990v30M1120 990v30" stroke="#707070" strokeWidth="12" fill="none" />
      <Mirror x={1420} y={632} s="118" w={620}>Fubarino Mini</Mirror>
      <Mirror x={1290} y={815} s="56" w={690}>www.fubarino.org/Mini</Mirror>
      <Mirror x={1330} y={882} s="50" w={860}>www.schmalzhaus.com</Mirror>
      <Mirror x={365} y={880} s="44" w={170}>Kipe/</Mirror>
      <Mirror x={380} y={475} s="52" w={200}>+1.4g</Mirror>
      <Mirror x={300} y={535} s="56" w={110}>gst</Mirror>
      <Mirror x={265} y={605} s="52" w={80}>99</Mirror>
      <g opacity=".85">
        {[[560, "0"], [690, "8"], [800, "8"], [910, "9"]].map(([x, t]) => <Mirror key={x} x={x} y={472} s="54" w={44}>{t}</Mirror>)}
        {[[280, "98"], [600, "5"], [690, "2"], [910, "21"], [1035, "25"], [1150, "26"]].map(([x, t]) => <Mirror key={x} x={x} y={985} s="54" w={t.length * 36} f="#9a9a9a">{t}</Mirror>)}
      </g>
      <text x="455" y="535" fontSize="62" fontFamily={bold} fontWeight="700" fill="#5e5e5e" textLength="200">RESET</text>
      <text transform="translate(860 700) rotate(-47)" fontSize="56" fontFamily={bold} fontWeight="700" fill="#666" textLength="300">Fubarino</text>
      <rect x="120" y="822" width="310" height="115" fill="url(#gdots)" />
      <path d="M175 800h115v85h-115z" fill="none" stroke="#a58a8a" strokeWidth="14" />
      <path d="M200 860l20-20M265 850v25M220 810h60" stroke="#b22" strokeWidth="22" />
      <path d="M150 828H405V916H150z" fill="none" stroke="#9a9020" strokeWidth="10" />
      <path d="M405 850h50l35-28M405 892h50l40 35" fill="none" stroke="#9a9020" strokeWidth="20" />
      <path d="M250 860h60M260 885h55M280 850v45" stroke="#c4ae20" strokeWidth="14" />
      <path d="M50 430H160V995H50zM50 543H160M50 430H441" fill="none" stroke="#9a9292" strokeWidth="11" />
      <path d="M160 993H1200" stroke="#777" strokeWidth="9" />
      {smd1.map((d, i) => <Smd key={i} d={d} />)}
      <path d="M548 548H771V690H548zM222 475l45-45M440 475l-42-45M222 610l42 45M405 655l40-45M580 815l40-48M795 815l-38-48M580 950l42 45M800 950l-42 45M414 485v110M603 830v112" fill="none" stroke="#b3a62c" strokeWidth="7" />
      {chip1.map((d, i) => <Chip2 key={i} d={d} />)}
      <path d="M867 715L1117 460 1367 710 1117 960z" fill="none" stroke="#c9b82a" strokeWidth="6" />
      {pins.map(([x, y, r], i) => (
        <g key={i} transform={`rotate(${r} ${x} ${y})`}><rect x={x - 8} y={y - 17} width="16" height="34" fill="#9c3038" stroke="#b99" strokeWidth="4" /></g>
      ))}
      <path d="M905 740L1095 930M905 690L1095 500" stroke="#b3a62c" strokeWidth="5" />
      {via1.map(([x, y]) => <Via key={x} x={x} y={y} />)}
      <Lbl x={265} y={477} w={115}>RESET</Lbl><Lbl x={190} y={682} w={70}>R10</Lbl><Lbl x={185} y={768} w={72}>10K</Lbl><Lbl x={360} y={765} w={72}>10K</Lbl>
      <Lbl x={515} y={776} w={95}>12pF</Lbl><Lbl x={675} y={776} w={95}>12pF</Lbl><Lbl x={215} y={824} w={90}>.18pF</Lbl><Lbl x={190} y={990} w={115}>e18pF</Lbl>
      <Lbl x={612} y={858} w={175}>PROGRAM</Lbl><Lbl x={765} y={912} w={95}>0.1U</Lbl><Lbl x={790} y={536} w={100}>.1uF</Lbl><Lbl x={805} y={452} w={545}>PIC32MX250F128D/44TQ</Lbl>
      <Lbl x={400} y={852} w={80}>Q2</Lbl>
      <path d="M175 430h35M190 412v36M180 670v30M165 685h30M460 685h50M480 670v40M480 885h60M508 860v50M1165 374h30M1180 355v38M1165 1048h30M1180 1030v38M312 543h36M670 882h40M240 868v24M226 880h28" stroke="#e8e8e8" strokeWidth="3" />
    </g>

    <g transform="translate(520 340) scale(.33333)">
      {lines(blue2, "#24249c", 13)}
      {lines(red2, "#922020", 13)}
      <path d="M798 388h30q82 12 82 90 0 82-82 92h-30" fill="none" stroke="#b2b2b2" strokeWidth="36" />
      <path d="M970 388q95 0 110 78M970 552q90 0 100-60" fill="none" stroke="#b9b9b9" strokeWidth="36" />
      <path d="M1047 82h108v105h-108z" fill="none" stroke="#aaa" strokeWidth="10" />
      <circle cx="709" cy="281" r="38" fill="none" stroke="#555" strokeWidth="18" strokeDasharray="22 4" />
      <path d="M340 440v90M375 440v90M320 530h80M360 320h70M420 300v110M515 245h100M560 620h140M910 300h50M775 300v75M250 320h40" stroke="#8c8c8c" strokeWidth="13" />
      {[[110, 235, "20"], [220, 260, "19"], [345, 250, "18"], [430, 280, "P"], [700, 225, "8"], [780, 260, "4"]].map(([x, y, t]) => <Mirror key={x} x={x} y={y} s="56" w={t.length * 32} f="#8d8d8d">{t}</Mirror>)}
      {[[30, 745, "27"], [130, 745, "28"], [240, 745, "29"], [235, 708, "8"], [345, 708, "6"], [460, 740, "9"], [580, 740, "08"], [770, 750, "3"], [900, 750, "8"]].map(([x, y, t]) => <Mirror key={x} x={x} y={y} s="56" w={t.length * 30} f="#a0a0a0">{t}</Mirror>)}
      <Mirror x={560} y={648} s="60" w={200} f="#aaa">-qsd</Mirror>
      <g fontFamily={bold} fontWeight="700" fill="#a8a8a8">
        <text transform="translate(1010 315) rotate(-90)" fontSize="56" textLength="125">GND</text>
        <text transform="translate(1130 765) rotate(-90)" fontSize="62">n</text>
        <text transform="translate(1090 365) rotate(90) scale(1 -1)" fontSize="56">r</text>
        <text transform="translate(1012 735) rotate(-90)" fontSize="50" fill="#999">25</text>
        <text transform="translate(788 670) rotate(-90)" fontSize="50">2EF</text>
        <text x="420" y="710" fontSize="52" fill="#777">DED1</text>
        <text x="905" y="272" fontSize="50" fill="#777">Vost</text>
      </g>
      <path d="M635 400l60 70M700 400l-65 70M630 395h70M630 478h75" stroke="#bbb" strokeWidth="8" fill="none" />
      <rect x="525" y="296" width="170" height="100" rx="50" fill="url(#red)" stroke="#a43a3a" strokeWidth="4" />
      <path d="M621 306q50 8 46 42 0 34-46 44z" fill="url(#yel)" />
      <path d="M543 345h54M570 318v54" stroke="#fff" strokeWidth="3" />
      {smd2.map((d, i) => <Smd key={i} d={d} />)}
      <path d="M478 270h34v22h-34zM478 332h34v26h-34zM478 402h34v24h-34z" fill="url(#yel)" />
      {chip2.map((d, i) => <Chip2 key={i} d={d} />)}
      <path d="M513 245v200M624 245v175M1140 300H1177V642H1140" fill="none" stroke="#a59a28" strokeWidth="7" />
      <path d="M1175 296V646" stroke="#8f8a22" strokeWidth="11" />
      {[350, 524].map((y) => (
        <g key={y} fill="none" stroke="#1b8a8a" strokeWidth="5"><rect x="912" y={y} width="46" height="66" /><path d={`M912 ${y + 16}h46M912 ${y + 50}h46M935 ${y}v66M914 ${y + 16}l42 34M956 ${y + 16}l-42 34`} /><circle cx="935" cy={y + 33} r="14" stroke="#ddd" strokeWidth="3" /></g>
      ))}
      {via2.map(([x, y], i) => <Via key={i} x={x} y={y} />)}
      <path d="M902 200v40M918 225h40" stroke="#2a2" strokeWidth="6" />
      <Lbl x={0} y={210} w={190}>Cap144</Lbl><Lbl x={300} y={212} w={120}>LED2</Lbl><Lbl x={460} y={218} w={420}>MCP1702T-3302E/MB</Lbl><Lbl x={290} y={235} w={130}>GREEN</Lbl>
      <Lbl x={915} y={462} w={145}>USB-50</Lbl><Lbl x={925} y={503} w={60}>U18</Lbl><Lbl x={790} y={594} w={220}>M1B059QNS</Lbl><Lbl x={410} y={465} w={80}>10uF</Lbl><Lbl x={535} y={452} w={80}>10K</Lbl>
      <Lbl x={340} y={415} w={90}>0.1uF</Lbl><Lbl x={345} y={388} w={65}>C10</Lbl><Lbl x={535} y={620} w={150}>R8.1uF</Lbl><Lbl x={450} y={718} w={170}>RED R11</Lbl><Lbl x={520} y={745} w={125}>330R</Lbl>
      <Lbl x={720} y={752} w={205}>0040WS-7</Lbl><Lbl x={110} y={706} w={90}>0.1</Lbl>
      <path d="M335 160v50M450 160v50M560 160v50M895 165v30M1105 210h45M1127 190v40M0 133h45M35 115v36M0 808h45M35 790v36M315 600h35M332 583v40M635 650h40M655 632v40M640 272h30M655 255v34" stroke="#ddd" strokeWidth="3" />
      <Lbl x={2} y={70} s={40} w={75}>M20</Lbl><Lbl x={2} y={903} s={40} w={52}>J2</Lbl><Lbl x={2} y={938} s={38} w={62}>M20</Lbl>
      <text x="108" y="165" fontSize="40" fontFamily={mono} fill="#b8f0b8">J1</text>
    </g>
    {headPads.map(([x, y], i) => <Pad key={i} x={x} y={y} />)}
    <Pad x={304} y={531} r={13} /><Pad x={304} y={569} r={13} />
    <rect x="156.500" y="366.500" width="750" height="262" fill="none" stroke="#8f3050" strokeWidth="4" strokeDasharray="4.500 5" />
    <rect x="156.500" y="366.500" width="750" height="262" fill="none" stroke="#a8909a" strokeWidth="1" />
    <path d="M147 628.500h20M156.500 618v20" stroke="#fff" strokeDasharray="1 1" />
    <g stroke="#8f8f8f"><path d="M115 432h10M120 427v10M115 448h10M120 443v10M517 360h9M521.500 355v9M514 641h10M519 636v10M514 652h10M519 648v10" /></g>
    <g fill="#8f8f8f" fontFamily={mono} fontSize="14">
      <text x="120" y="433">J3</text><text x="120" y="449" textLength="30" lengthAdjust="spacingAndGlyphs">ICSP</text>
    </g>

    <g fill="#9a9828" stroke="#000" strokeWidth=".5" fontFamily={mono} fontSize="33.500">
      {notes.map((t, i) => <text key={t} y={834.9 + i * 33.2} x={advances(t, 172.6)}>{t}</text>)}
    </g>
    <g stroke="rgba(128,128,128,.33)" strokeWidth="1" shapeRendering="crispEdges">
      {vGrid.map((x) => <path key={x} d={`M${x} 92V975`} />)}
      {hGrid.map((y) => <path key={y} d={`M53 ${y}H1082`} />)}
    </g>
  </svg>
);

const ErrIcon = () => (
  <svg width="16" height="16" viewBox="0 0 16 16"><defs><radialGradient id="er" cx=".4" cy=".25"><stop offset="0" stopColor="#ff8a80" /><stop offset=".5" stopColor="#e81414" /><stop offset="1" stopColor="#d00808" /></radialGradient></defs>
    <circle cx="8" cy="8" r="7.700" fill="url(#er)" stroke="#a81010" strokeWidth=".5" /><path d="M5 5l6 6M11 5l-6 6" stroke="#fff" strokeWidth="2.800" /></svg>
);
const XMark = () => <svg width="9" height="8" viewBox="0 0 9 8"><path d="M1 .5l7 7M8 .5l-7 7" stroke="#fff" strokeWidth="1.800" /></svg>;
const rows = [...Array(14).fill(["Keepout", 39]), ...Array(27).fill(["Stop Mask", 29]), ...Array(2).fill(["Stop Mask", 30])];
const menu = [["File", 19], ["Edit", 20], ["Draw", 27], ["View", 25], ["Tools", 27], ["Library", 37], ["Options", 42], ["Window", 44], ["Help", 25]];
const cells = (a) => a.map((x, i) => <Slot key={i} $on={x === side2[0]}>{x}</Slot>);

const IE = () => <svg width="18" height="18" viewBox="0 0 18 18" fill="none"><path d="M4 10h11q0-6-5.500-6T4 10q0 6 5.500 6 4 0 5.500-3" stroke="#5cc4f8" strokeWidth="2.800" /><path d="M2 16q-2-3 6-9t9-4q1 1-1 4" stroke="#f3c73c" strokeWidth="1.400" /></svg>;
const Folder = () => <svg width="18" height="16" viewBox="0 0 18 16"><path d="M1 2h6l1 2h8v11H1z" fill="#f3e29a" stroke="#b99b3c" strokeWidth=".6" /><path d="M3 5h12v4H3z" fill="#fff7cf" /><path d="M4 15V9q5-2 10 0v6h-3v-3H7v3z" fill="#6cc0ea" stroke="#3a86b5" strokeWidth=".6" /></svg>;
const Chrome = () => <svg width="16" height="16" viewBox="0 0 16 16"><circle cx="8" cy="8" r="7" fill="#f5c81e" /><path d="M8 8L1.900 4.500A7 7 0 0 1 15 6z" fill="#dd4030" /><path d="M8 8L1.900 4.500A7 7 0 0 0 7 15z" fill="#33a04a" /><circle cx="8" cy="8" r="3.500" fill="#fff" /><circle cx="8" cy="8" r="2.600" fill="#3f7fe0" /></svg>;
const Outlook = () => <svg width="18" height="16" viewBox="0 0 18 16"><path d="M0 2l10-2v16L0 14z" fill="#0a6ac4" /><circle cx="5" cy="8" r="2.300" fill="none" stroke="#fff" strokeWidth="1.500" /><rect x="11" y="3" width="6" height="9" fill="#fff" stroke="#0a6ac4" /><path d="M11 5l3 3 3-4" stroke="#0a6ac4" fill="none" /></svg>;
const RedX = () => <svg width="18" height="16" viewBox="0 0 18 16"><path d="M2 1l4-1 4 5 4-4 2 1-4 6 5 6-4 2-4-5-4 4-4-1 5-6z" fill="#c4181c" stroke="#701010" strokeWidth=".7" /></svg>;
const TermI = () => <svg width="16" height="16" viewBox="0 0 16 16"><path d="M3 10l10 0 3 4-10 1z" fill="#aaa" stroke="#555" strokeWidth=".6" /><path d="M2 1l9-1 1 9-9 1z" fill="#f0d82a" stroke="#8a7a10" strokeWidth=".6" /><path d="M4 3h6M7 3v5" stroke="#222" strokeWidth="1.400" /></svg>;
const Bird = () => <svg width="14" height="16" viewBox="0 0 14 16"><path d="M7 1l3 1-1 3 3 4-2 1v3l-4 2-1-2-3 1 1-3 1-4 2-2z" fill="#ef2b2b" /></svg>;

export default function App() {
  return (
    <Desktop>
      <Global />
      <LeftEdge />
      <Main>
        <TitleBar>
          <Chip /><TitleText>{"2 Board - D:\\Projects\\fubarino.github.com\\mini\\v16\\FubarinoMini_v16.brd - EAGLE 6.4.0 Professional"}</TitleText>
          <WinButtons>
            <RestoreBox><svg width="10" height="8" viewBox="0 0 10 8" fill="none" stroke="#222"><path d="M2.500 3V.5h7V7H7" /><path d="M.5 8V3h6v5" strokeWidth="1.600" /></svg></RestoreBox>
            <GreyClose><XMark /></GreyClose>
          </WinButtons>
        </TitleBar>
        <MenuBar>{menu.map(([m, w]) => <MenuItem key={m} $w={w}>{m}</MenuItem>)}</MenuBar>
        <ToolBar>
          <Grip $m="0 2px 0 0" />
          {topA.map((x, i) => <Slot key={i}>{x}</Slot>)}
          <Sep $w={5} /><Slot><Gates /></Slot><Sep $w={7} /><Slot><Books /></Slot><Sep />
          <Slot><Script t="SCR" /></Slot><Slot><Script t="ULP" /></Slot><Sep />
          <Slot><Lens><rect x="5" y="4.500" width="5" height="3.500" stroke="#11c" /><path d="M5 8h5" stroke="#d00" /></Lens></Slot>
          <Slot><Lens><path d="M4.500 6.500h6M7.500 3.500v6" stroke="#11c" strokeWidth="1.300" /><path d="M4 15.500h3M5.500 14v3" stroke="#d00" /></Lens></Slot>
          <Slot><Lens><path d="M5 6.500h5" stroke="#d00" strokeWidth="1.300" /><path d="M1 15.500h7" stroke="#11c" strokeDasharray="3 1" /></Lens></Slot>
          <Slot><Lens><path d="M5 5.500h5M5 7.500h5" stroke="#d00" /><path d="M2 14.500h5M2 16.500h5" stroke="#11c" /></Lens></Slot>
          <Slot><Lens page><rect x="5.500" y="4.500" width="4" height="4" stroke="#11c" /></Lens></Slot>
          <Sep />
          <Slot><Undo /></Slot><Slot><Undo flip /></Slot>
          <Sep /><Slot><Stop /></Slot><Slot><Light /></Slot><Sep $w={12} $two /><Slot><Help /></Slot>
          <BarEnd $m="0 2px 0 1px" /><Grip $m="0 6px 0 0" />
          <Slot $w={42}>
            <svg width="42" height="22" viewBox="0 -2 42 22" fontFamily={ui} fontSize="10.500"><text x="0" y="9" fill="#c8355c" stroke="#c8355c" strokeWidth=".3" textLength="29">design</text><text x="24" y="17" fill="#2c8ab5" stroke="#2c8ab5" strokeWidth=".3" textLength="17" lengthAdjust="spacingAndGlyphs">link</text></svg>
          </Slot>
          <Slot $w={51}>
            <svg width="37" height="16" viewBox="0 0 37 16" shapeRendering="crispEdges"><rect width="15" height="15" fill="#5aa818" stroke="#356a10" /><path d="M3 12V8h3M7 3v6l2 2v3M12 6v5h-2M7 4h2" fill="none" stroke="#eaf04a" /><text x="16" y="6.500" fontSize="8" fontFamily={mono} fontWeight="700" fill="#444" textLength="11" lengthAdjust="spacingAndGlyphs">PCB</text><text x="16" y="15" fontSize="8" fontFamily={mono} fontWeight="700" fill="#444" textLength="20" lengthAdjust="spacingAndGlyphs">QUOTE</text></svg>
          </Slot>
          <BarEnd $m="0 3px 0 2px" /><Grip $m="0 4px 0 0" />
          <Slot><GridIco /></Slot><Sep $w={5} /><AngleLabel>Angle:</AngleLabel>
          <Select>0<svg width="8" height="6" viewBox="0 0 8 6" fill="none" stroke="#444" strokeWidth="1.700"><path d="M1 1l3 3.500L7 1" /></svg></Select>
          <Sep /><Slot $on><Abc /></Slot><Slot><Abc flip /></Slot><Sep /><Slot $on><Panels r /></Slot><Slot $w={21}><Panels /></Slot>
        </ToolBar>
        <Work>
          <SideBar>
            <Grip $h $m="0 0 0 3px" />
            <Tools $t={2}>{cells(side1)}</Tools><HSep $m="2px" $b="3px" />
            <Tools>{cells(side2)}</Tools><HSep $m="2px" $b="3px" />
            <Tools>{cells(side3)}</Tools><HSep $m="2px" $b="3px" />
            <Tools>{cells(side4)}</Tools>
          </SideBar>
          <Stage>
            <CoordRow>
              <Coord $w={120} $f={11.3} $ls={-0.15}>0.05 inch (1.70 1.40)</Coord>
              <Coord $w={311} $f={11.3} $ls={-0.22}>(R -0.10000000 0.98110236) (P 0.98618550 95.81984054°)</Coord>
              <Command />
            </CoordRow>
            <Board />
            <Scroll>
              <svg width="16" height="14" viewBox="0 0 16 14" fill="none" stroke="#444" strokeWidth="1.700"><path d="M10 3.500L6.500 7l3.500 3.500" /></svg>
              <Thumb><Nub /></Thumb>
            </Scroll>
          </Stage>
        </Work>
        <Status>
          <StatusText $w={80} $ls={-0.18}>DRC: 43 errors.</StatusText>
          <svg width="6" height="9" viewBox="0 0 6 9"><path d="M3 0l3 4.500L3 9 0 4.500z" /></svg>
          <StatusText $w={400} $ls={0.01}>Left-click to select object to move (Ctrl+right-click to move group)</StatusText>
        </Status>
        <TaskBar>
          <LaunchSlot><IE /></LaunchSlot>
          <TaskBtn $w={42}><TaskFace><Folder /></TaskFace><Stack /></TaskBtn>
          <TaskBtn><TaskFace><Chrome /></TaskFace></TaskBtn>
          <TaskBtn><TaskFace><Outlook /></TaskFace></TaskBtn>
          <TaskBtn><TaskFace><RedX /></TaskFace></TaskBtn>
          <TaskBtn><TaskFace><TermI /></TaskFace></TaskBtn>
          <TaskBtn $hot $w={43}><TaskFace $hot><Bird /></TaskFace><Stack /><Stack /></TaskBtn>
          <Tray>
            <svg width="86" height="18" viewBox="0 0 86 18" fill="none" stroke="#fff" strokeWidth="1.400">
              <path d="M1 11l4-5 4 5z" fill="#fff" stroke="none" />
              <path d="M22.500 2v14" /><path d="M24 3h6v2h6v2l-2 2 1 2h-6v-2h-5z" fill="#fff" stroke="none" />
              <path d="M53 4h8v8h-9M54 15h7M57 12v3M48 2.500h3v4h-3zM49.500 7v8h3" />
              <path d="M71 6h2.500l4-4v13l-4-4H71z" fill="#fff" stroke="none" /><path d="M80 5q3 3.500 0 7M83 3q5 5.500 0 11" strokeWidth="1.200" />
            </svg>
            <Clock>7:35 PM</Clock>
          </Tray>
        </TaskBar>
      </Main>
      <RightEdge />

      <Dialog>
        <DlgTitle>
          <DlgIcon><Chip /></DlgIcon><DlgName>DRC Errors</DlgName><DlgClose><XMark /></DlgClose>
        </DlgTitle>
        <DlgBody>
          <List>
            <Head>
              <HeadType>Type<SortMark><svg width="7" height="4" viewBox="0 0 7 4"><path d="M0 4l3.500-3.500L7 4z" fill="#6aa0c4" /></svg></SortMark></HeadType>
              <HeadLayer>Layer</HeadLayer>
            </Head>
            <Group><svg width="7" height="7" viewBox="0 0 7 7"><path d="M6.500 0v6.500H0z" fill="#333" /></svg>Errors (43)</Group>
            {rows.map(([t, l], i) => <Row key={i}><ErrIcon /><RowText>{t}</RowText><RowLayer>{l}</RowLayer></Row>)}
            <Group $l={23}>Approved (0)</Group>
          </List>
          <Buttons>
            <Check><Box><svg width="9" height="9" viewBox="0 0 9 9" fill="none" stroke="#111" strokeWidth="1.900"><path d="M1 4.500L3.500 7 8 1.500" /></svg></Box>Centered</Check>
            <Button>Clear all</Button>
            <Button $off>Processed</Button><Button $off>Approve</Button>
          </Buttons>
        </DlgBody>
      </Dialog>
    </Desktop>
  );
}
